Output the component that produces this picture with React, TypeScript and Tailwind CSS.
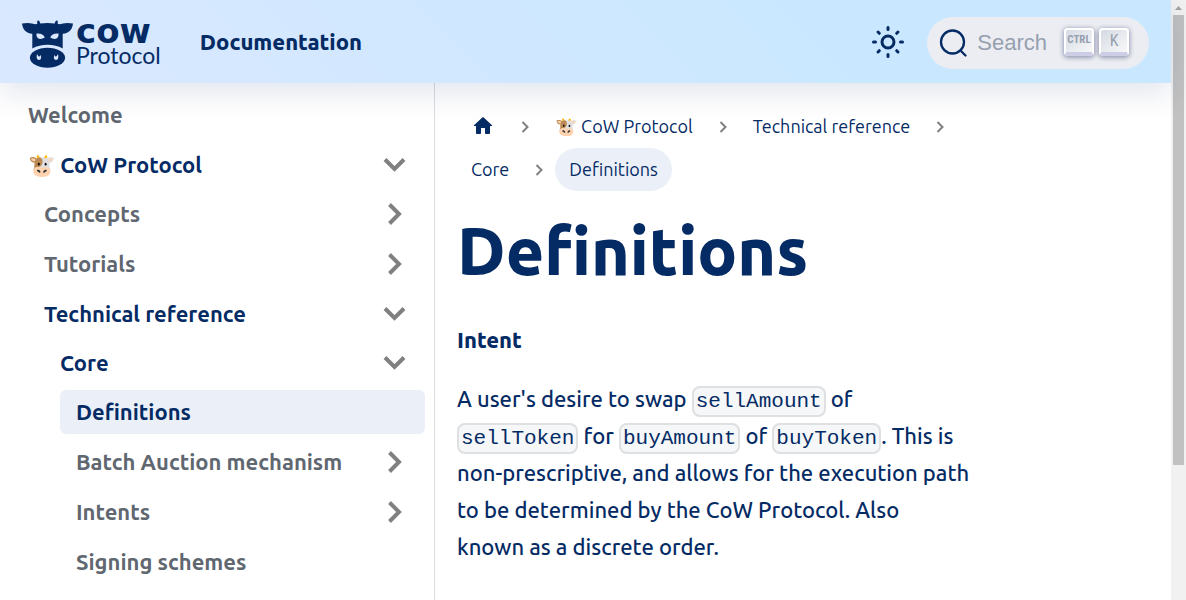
import type { ReactNode } from "react";

type Item = { label: string; state?: "open" | "closed"; active?: boolean; children?: Item[] };

const nav: Item[] = [
  { label: "Welcome" },
  {
    label: "🐮 CoW Protocol",
    state: "open",
    children: [
      { label: "Concepts", state: "closed" },
      { label: "Tutorials", state: "closed" },
      {
        label: "Technical reference",
        state: "open",
        children: [
          {
            label: "Core",
            state: "open",
            children: [
              { label: "Definitions", active: true },
              { label: "Batch Auction mechanism", state: "closed" },
              { label: "Intents", state: "closed" },
              { label: "Signing schemes" },
            ],
          },
        ],
      },
    ],
  },
];

function CowLogo() {
  return (
    <svg viewBox="0 0 52 48" className="h-12 w-[52px] shrink-0" aria-hidden="true">
      <path
        fill="#052b65"
        d="M0 3.600 Q6 2.600 10 3.600 Q14 4.600 15.300 3.800 Q14.600 1.500 16 0.300 Q17.800 0.800 18.300 3.600 Q25.500 2.200 32.700 3.600 Q33.200 0.800 35 0.300 Q36.400 1.500 35.700 3.800 Q37 4.600 41 3.600 Q45 2.600 51 3.600 Q50.500 10 45.500 12.500 Q43 13.800 40.700 13.800 V28.500 Q34 24.800 25.500 24.800 Q17 24.800 10.300 28.500 V13.800 Q8 13.800 5.500 12.500 Q0.500 10 0 3.600Z"
      />
      <path fill="#d9e8ff" d="M14.500 13.500 Q21 13 22.800 17.500 Q20 19.400 17 18.800 Q14 17.500 14.500 13.500Z M36.500 13.500 Q30 13 28.200 17.500 Q31 19.400 34 18.800 Q37 17.500 36.500 13.500Z" />
      <ellipse cx="25.500" cy="37.700" rx="17.600" ry="10" fill="#052b65" />
      <path fill="#d9e8ff" d="M15 34 Q13.600 39.500 17 40 Q20.200 39.400 18.600 35 L17.200 36.800 Q16 36 15 34Z M36 34 Q37.400 39.500 34 40 Q30.800 39.400 32.400 35 L33.800 36.800 Q35 36 36 34Z" />
    </svg>
  );
}

function Chevron({ open }: { open: boolean }) {
  return (
    <svg viewBox="0 0 24 24" className="size-6" fill="none" stroke="#808080" strokeWidth="4" aria-hidden="true">
      {open ? <path d="M2 6.500 11.500 16l9.500-9.500" /> : <path d="M6.500 2.500 16 12l-9.500 9.500" />}
    </svg>
  );
}

function Crumb({ children, active }: { children: ReactNode; active?: boolean }) {
  return (
    <a href="#" className={`flex h-[43px] items-center rounded-full px-3.5 pb-0.5 ${active ? "bg-[#ebf0f8]" : ""}`}>
      {children}
    </a>
  );
}

function Separator() {
  return (
    <span className="px-2.5">
      <svg viewBox="0 0 12 12" className="size-3" fill="none" stroke="#808080" strokeWidth="2" aria-hidden="true">
        <path d="M3.500 1 8.500 6l-5 5" />
      </svg>
    </span>
  );
}

function NavList({ items, nested }: { items: Item[]; nested?: boolean }) {
  return (
    <ul className={`flex flex-col gap-1.5 ${nested ? "mt-[5px] pl-4" : ""}`}>
      {items.map((item) => (
        <li key={item.label}>
          <div className={`flex h-11 items-center justify-between rounded-md ${item.active ? "bg-[#ebf0f8]" : ""}`}>
            <a
              href="#"
              className={`pb-0.5 pl-4 whitespace-nowrap ${
                item.active || item.state === "open" ? "text-[#052b65]" : "text-[#606770]"
              }`}
            >
              {item.label}
            </a>
            {item.state && (
              <button type="button" aria-label={`Toggle ${item.label}`} className="flex h-11 w-15 items-center justify-center">
                <Chevron open={item.state === "open"} />
              </button>
            )}
          </div>
          {item.children && <NavList items={item.children} nested />}
        </li>
      ))}
    </ul>
  );
}

function Code({ children }: { children: string }) {
  return (
    <code className="rounded-lg border-2 border-[#dfe0e1] bg-[#f6f7f8] px-0.5 py-0.5 font-['Liberation_Mono',monospace] text-[21px]/6 font-normal">
      {children}
    </code>
  );
}

function Key({ children }: { children: ReactNode }) {
  return (
    <kbd className="flex h-7 w-[30px] items-center justify-center rounded-sm border-2 border-b-4 border-white border-b-[#cdcde6] bg-linear-to-br from-[#d5dbe4] to-[#f8f8f8] font-['Roboto_Condensed','Roboto',sans-serif] text-[#969faf] shadow-[0_1px_4px_1px_rgba(30,35,90,0.4)]">
      {children}
    </kbd>
  );
}

export default function App() {
  return (
    <div className="flex h-screen overflow-hidden bg-white font-[Ubuntu,'Noto_Sans',sans-serif] text-[#052b65]">
      <div className="flex min-w-0 flex-1 flex-col">
        <header className="relative z-10 flex h-[83px] shrink-0 items-center justify-between bg-linear-45 from-[#dae8ff] to-[#c9e8ff] to-70% px-[22px] pt-1 shadow-[0_10px_30px_0_rgba(5,43,101,0.12)]">
          <div className="flex items-center gap-[39px]">
            <a href="#" aria-label="CoW Protocol" className="flex items-center gap-0.5">
              <CowLogo />
              <span className="flex flex-col gap-0.5">
                <span className="font-['DejaVu_Sans',sans-serif] text-[34px]/[20px] font-bold">cow</span>
                <span className="font-[Lato,sans-serif] text-[23px]/6">Protocol</span>
              </span>
            </a>
            <a href="#" className="pb-1 text-[22px] font-extrabold">
              Documentation
            </a>
          </div>
          <div className="flex items-center gap-[22px]">
            <button type="button" aria-label="Switch theme" className="pb-1">
              <svg viewBox="0 0 34 34" className="size-[34px]" fill="none" stroke="#052b65" strokeWidth="3" strokeLinecap="round" aria-hidden="true">
                <circle cx="17" cy="17" r="6" />
                <path d="M17 2.500v2M17 29.500v2M2.500 17h2M29.500 17h2M7 7l1.300 1.300M25.700 25.700 27 27M7 27l1.300-1.300M25.700 8.300 27 7" />
              </svg>
            </button>
            <button type="button" className="mb-0.5 flex h-[52px] items-center rounded-full bg-[#ebedf2] pr-5 pl-3">
              <svg viewBox="0 0 28 28" className="size-7" fill="none" stroke="#052b65" strokeWidth="2.300" strokeLinecap="round" aria-hidden="true">
                <circle cx="13.500" cy="13" r="11.500" />
                <path d="m21.500 21.500 5 5" />
              </svg>
              <span className="mr-[17px] ml-2.5 font-['Liberation_Sans',sans-serif] text-[22px] text-[#969faf]">Search</span>
              <span className="flex gap-[5px] pb-0.5">
                <Key>
                  <span className="text-[11px] font-bold">CTRL</span>
                </Key>
                <Key>
                  <span className="text-base">K</span>
                </Key>
              </span>
            </button>
          </div>
        </header>
        <div className="flex min-h-0 flex-1">
          <nav aria-label="Docs sidebar" className="w-[435px] shrink-0 border-r border-[#dadde1] pt-2.5 pr-[9px] pl-3 text-[22px] font-semibold">
            <NavList items={nav} />
          </nav>
          <main className="min-w-0 flex-1 px-[22px] pt-[22px]">
            <article className="w-3/4">
              <nav aria-label="Breadcrumbs" className="flex flex-wrap items-center text-lg">
                <Crumb>
                  <svg viewBox="0 0 24 24" className="size-6" fill="#052b65" aria-label="Home">
                    <path d="M10 19v-5h4v5c0 .55.45 1 1 1h3c.55 0 1-.45 1-1v-7h1.700c.46 0 .68-.57.33-.87L12.670 3.600c-.38-.34-.96-.34-1.340 0l-8.360 7.530c-.34.3-.13.87.33.87H5v7c0 .55.45 1 1 1h3c.55 0 1-.45 1-1z" />
                  </svg>
                </Crumb>
                <Separator />
                <Crumb>🐮 CoW Protocol</Crumb>
                <Separator />
                <Crumb>Technical reference</Crumb>
                <Separator />
                <Crumb>Core</Crumb>
                <Separator />
                <Crumb active>Definitions</Crumb>
              </nav>
              <h1 className="mt-[18px] text-[66px]/[82px] font-extrabold">Definitions</h1>
              <div className="mt-[30px] text-[22px]/[37px] font-medium">
                <p className="font-extrabold">Intent</p>
                <p className="mt-[22px]">
                  A user's desire to swap <Code>sellAmount</Code> of <Code>sellToken</Code> for <Code>buyAmount</Code> of{" "}
                  <Code>buyToken</Code>. This is non-prescriptive, and allows for the execution path to be determined by the CoW
                  Protocol. Also known&nbsp;as a discrete order.
                </p>
              </div>
            </article>
          </main>
        </div>
      </div>
      <div aria-hidden="true" className="flex w-[15px] shrink-0 flex-col items-center bg-[#f1f1f1]">
        <svg viewBox="0 0 15 15" className="size-[15px] shrink-0" fill="#a3a3a3">
          <path d="M4 10 7.500 6l3.500 4z" />
        </svg>
        <div className="h-3/4 w-[11px] bg-[#c1c1c1]" />
      </div>
    </div>
  );
}
